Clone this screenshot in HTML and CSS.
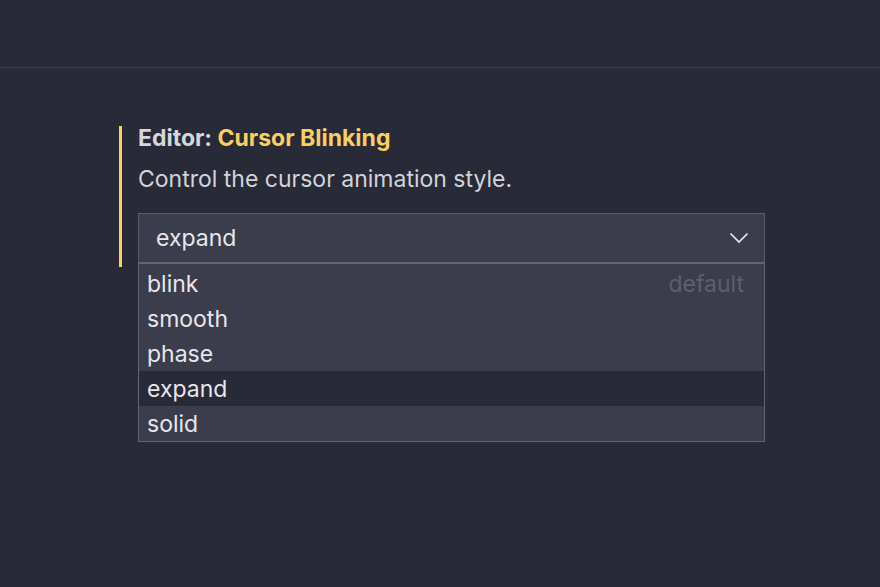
FILE: index.html
```html
<!DOCTYPE html>
<html>
<head>
<meta charset="utf-8">
<link rel="stylesheet" href="styles.css">
</head>
<body>
<header class="topbar"></header>
<main class="content">
  <section class="setting">
    <div class="title"><span class="cat">Editor:</span> <span class="name">Cursor Blinking</span></div>
    <div class="desc">Control the cursor animation style.</div>
    <div class="select-wrap">
      <div class="select">
        <span class="value">expand</span>
        <svg class="chevron" width="20" height="12" viewBox="0 0 20 12"><path d="M1.5 1.5 L10 10 L18.5 1.5" fill="none" stroke="#e8e9ec" stroke-width="1.7"/></svg>
      </div>
      <ul class="dropdown">
        <li class="opt"><span>blink</span><span class="def">default</span></li>
        <li class="opt"><span>smooth</span></li>
        <li class="opt"><span>phase</span></li>
        <li class="opt active"><span>expand</span></li>
        <li class="opt"><span>solid</span></li>
      </ul>
    </div>
  </section>
</main>
</body>
</html>
```
FILE: styles.css
```css
html, body {
  margin: 0;
  padding: 0;
  background: #282a37;
  height: 100%;
  font-family: Inter, "Noto Sans", sans-serif;
}
.topbar {
  height: 67px;
  border-bottom: 1px solid #3a3c46;
}
.content {
  padding: 58px 0 0 119px;
}
.setting {
  width: 646px;
  border-left: 3px solid #f9cf61;
  padding-left: 16px;
  padding-bottom: 4px;
  box-sizing: border-box;
}
.title {
  font-size: 23px;
  line-height: 24px;
  font-weight: 700;
  color: #d5d7dd;
}
.name { color: #f9cf61; }
.desc {
  margin-top: 17px;
  font-size: 23px;
  line-height: 24px;
  color: #d2d4da;
}
.select-wrap {
  position: relative;
  margin-top: 22px;
}
.select {
  height: 48px;
  border: 1px solid #5a5d6b;
  border-bottom-color: #62656f;
  background: #3b3d4c;
  display: flex;
  align-items: center;
  justify-content: space-between;
  padding: 0 15px 0 17px;
  color: #e6e7eb;
  font-size: 23px;
}
.chevron { display: block; }
.dropdown {
  position: absolute;
  left: 0;
  right: 0;
  top: 50px;
  margin: 0;
  padding: 2px 0 0;
  list-style: none;
  background: #3b3d4c;
  border: 1px solid #62656f;
  z-index: 2;
}
.opt {
  height: 35px;
  display: flex;
  align-items: center;
  justify-content: space-between;
  padding: 0 20px 0 8px;
  font-size: 23px;
  color: #e6e7eb;
}
.opt.active { background: #282a37; }
.def { color: #5c5f6d; }
```
